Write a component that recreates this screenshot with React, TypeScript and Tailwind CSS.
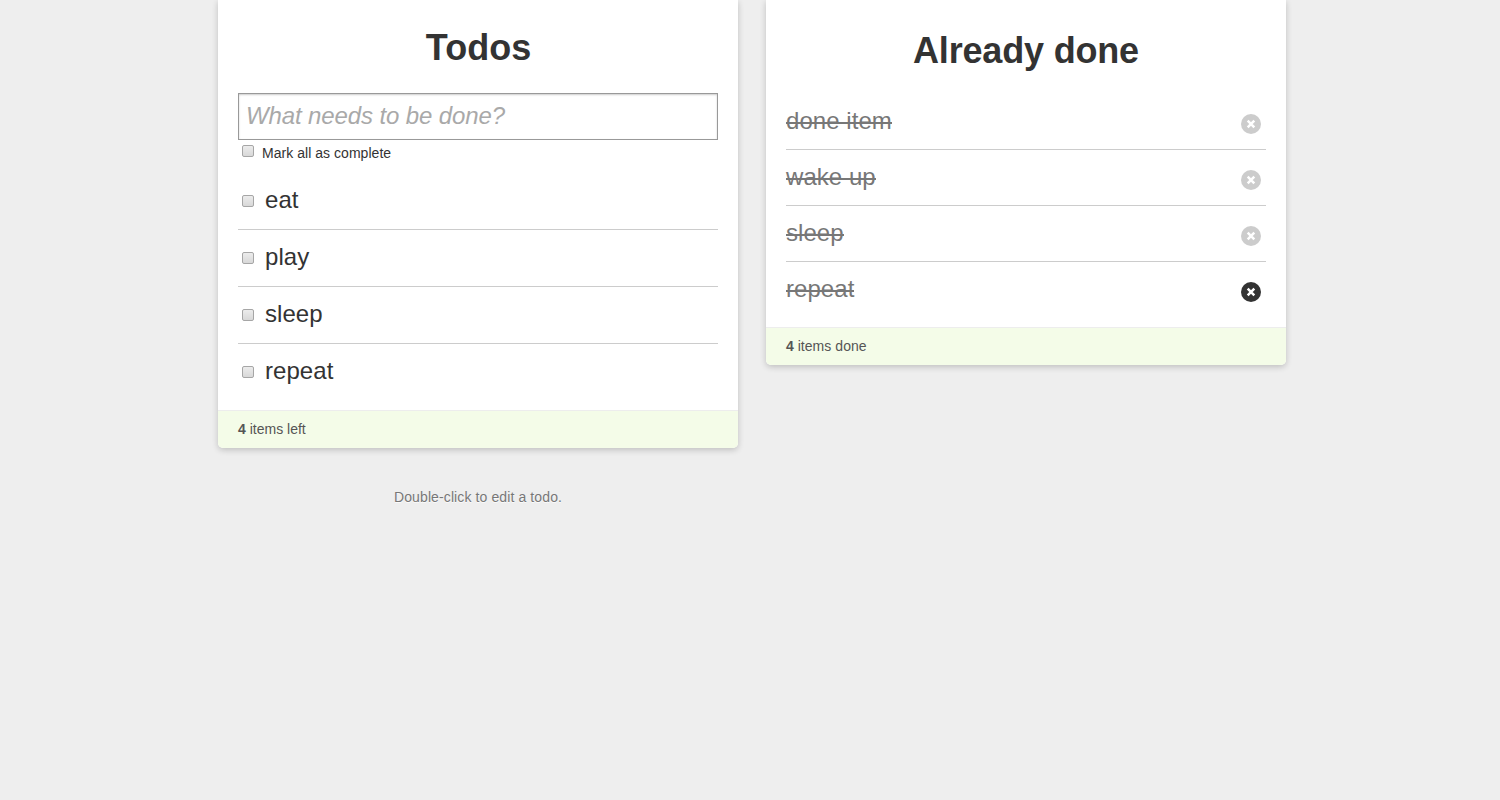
import React from "react";

const todos = ["eat", "play", "sleep", "repeat"];
const done = ["done item", "wake up", "sleep", "repeat"];

function Box() {
  return <span className="block size-3 shrink-0 rounded-[2px] border border-[#a6a6a6] bg-linear-to-b from-[#ececec] to-[#d8d8d8]" />;
}

export default function App() {
  return (
    <div className="flex min-h-screen items-start gap-7 bg-[#eeeeee] pl-[218px] text-[14px] leading-[20px] text-[#333333] [font-family:'Liberation_Sans',Arial,sans-serif]">
      <div className="w-[520px]">
        <section className="rounded-b-[5px] bg-white shadow-[0_2px_6px_rgba(0,0,0,0.2)]">
          <div className="h-[410px] px-5 pt-[23px]">
            <h1 className="pl-px text-center text-[36px] leading-[50px] font-bold">Todos</h1>
            <input
              placeholder="What needs to be done?"
              className="mt-5 block h-[47px] w-[480px] border border-[#999999] bg-white px-[7px] pb-[1px] text-[24px] leading-[34px] tracking-[-0.12px] shadow-[inset_0_1px_2px_rgba(0,0,0,0.2)] outline-none placeholder:text-[#a9a9a9] placeholder:italic"
            />
            <label className="flex h-[33px] items-start gap-2 pt-[5px] pl-1">
              <Box />
              <span className="-mt-[2px] tracking-[0.04px]">Mark all as complete</span>
            </label>
            <ul>
              {todos.map((t) => (
                <li key={t} className="flex h-[57px] items-center gap-[11px] border-b border-[#cccccc] pl-1 text-[24px] leading-[36px] last:border-transparent">
                  <Box />
                  <span className="mb-[2px] tracking-[0.05px]">{t}</span>
                </li>
              ))}
            </ul>
          </div>
          <footer className="h-[38px] rounded-b-[5px] border-t border-[#ededed] bg-[#f4fce8] px-5 pt-2 text-[#555555]">
            <b>4</b> items left
          </footer>
        </section>
        <p className="mt-[39px] text-center tracking-[0.11px] text-[#777777] [text-shadow:0_1px_0_rgba(255,255,255,0.8)]">Double-click to edit a todo.</p>
      </div>
      <section className="w-[520px] rounded-b-[5px] bg-white shadow-[0_2px_6px_rgba(0,0,0,0.2)]">
        <div className="h-[327px] px-5 pt-[26px]">
          <h1 className="text-center text-[36px] leading-[50px] font-bold tracking-[-0.18px]">Already done</h1>
          <ul className="mt-[18px]">
            {done.map((t, i) => (
              <li key={t} className="flex h-[56px] items-center justify-between border-b border-[#cccccc] pr-[5px] text-[24px] leading-[36px] text-[#777777] last:border-transparent">
                <span className="mb-[1px] bg-[linear-gradient(#777777,#777777)] bg-[length:100%_2px] bg-[position:0_19px] bg-no-repeat tracking-[0.05px]">{t}</span>
                <svg width="20" height="20" viewBox="0 0 20 20" className={i === 3 ? "mt-[5px] text-[#333333]" : "mt-[5px] text-[#cccccc]"}>
                  <circle cx="10" cy="10" r="10" fill="currentColor" />
                  <path d="M6.7 6.7l6.6 6.6M13.3 6.7l-6.6 6.6" stroke="#fff" strokeWidth="2.5" />
                </svg>
              </li>
            ))}
          </ul>
        </div>
        <footer className="h-[38px] rounded-b-[5px] border-t border-[#ededed] bg-[#f4fce8] px-5 pt-2 text-[#555555]">
          <b>4</b> <span className="tracking-[0.05px]">items done</span>
        </footer>
      </section>
    </div>
  );
}
